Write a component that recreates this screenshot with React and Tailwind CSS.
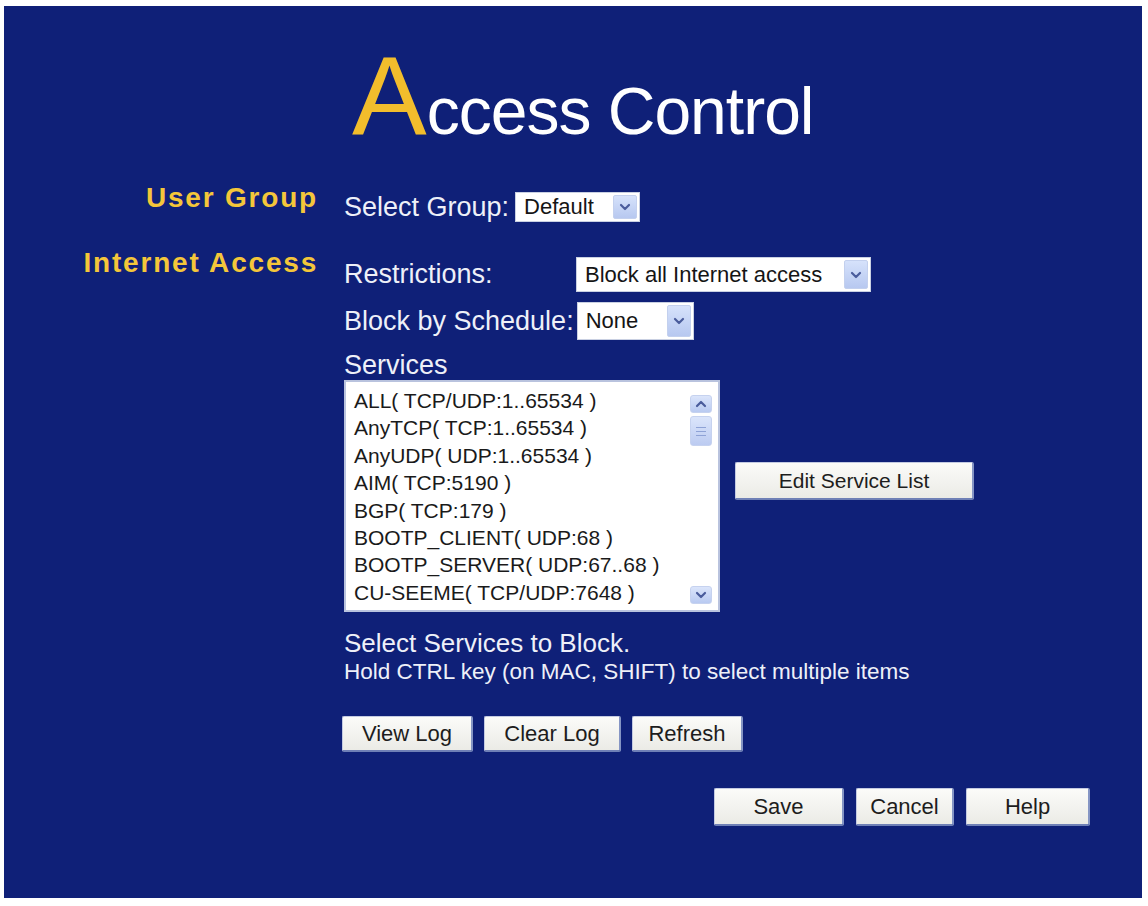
import React from 'react';

const services = [
  'ALL( TCP/UDP:1..65534 )',
  'AnyTCP( TCP:1..65534 )',
  'AnyUDP( UDP:1..65534 )',
  'AIM( TCP:5190 )',
  'BGP( TCP:179 )',
  'BOOTP_CLIENT( UDP:68 )',
  'BOOTP_SERVER( UDP:67..68 )',
  'CU-SEEME( TCP/UDP:7648 )',
];

const Chevron = ({ up = false }) => (
  <svg width="12" height="10" viewBox="0 0 12 10">
    <path
      d={up ? 'M2 7 L6 3 L10 7' : 'M2 3 L6 7 L10 3'}
      fill="none"
      stroke="#4a5c9c"
      strokeWidth="2.2"
      strokeLinecap="round"
      strokeLinejoin="round"
    />
  </svg>
);

const DropButton = () => (
  <div className="w-[24px] self-stretch my-[2px] mr-[2px] flex items-center justify-center rounded-[2px] bg-linear-to-b from-[#d6e2fb] to-[#b7c8f0] border border-[#c3d0ee]">
    <Chevron />
  </div>
);

const Select = ({ value, className }) => (
  <div className={`flex items-stretch bg-white border border-[#c9d0e2] ${className}`}>
    <div className="flex-1 flex items-center pl-[8px] text-[22px] text-[#151515] leading-none">{value}</div>
    <DropButton />
  </div>
);

const Button = ({ children, className }) => (
  <button
    className={`flex items-center justify-center bg-linear-to-b from-[#fbfbf9] to-[#ebebe6] border-t border-l border-[#c4cbe2] border-b-2 border-r-2 border-b-[#6f80b6] border-r-[#8595c4] rounded-[2px] text-[#1d1d1d] ${className}`}
  >
    {children}
  </button>
);

const ScrollBtn = ({ up }) => (
  <div className="w-[22px] h-[18px] flex items-center justify-center rounded-[3px] bg-linear-to-b from-[#dbe5fb] to-[#b9caf1] border border-[#c6d2ef]">
    <Chevron up={up} />
  </div>
);

export default function App() {
  return (
    <div
      className="w-[1148px] h-[906px] bg-white pt-[6px] pl-[4px]"
      style={{ fontFamily: '"Liberation Sans", Arial, sans-serif' }}
    >
      <div className="w-[1138px] h-[892px] bg-[#0f2078] flex flex-col">
        {/* Title */}
        <div className="mt-[34px] ml-[348px] leading-none text-[112px] whitespace-nowrap">
          <span className="text-[#f2bd2c]">A</span>
          <span className="text-[66px] text-white tracking-[-1px]">ccess Control</span>
        </div>

        <div className="flex mt-[40px]">
          {/* Section labels */}
          <div className="w-[314px] flex flex-col items-end text-[28px] font-bold tracking-[1.8px] text-[#f4c63a] leading-[30px] -mt-[9px]">
            <div>User Group</div>
            <div className="mt-[35px]">Internet Access</div>
          </div>

          {/* Form */}
          <div className="ml-[26px] w-[746px] flex flex-col text-[#eef0f8]">
            <div className="flex items-center h-[30px]">
              <span className="text-[27px] leading-[30px]">Select Group:</span>
              <Select value="Default" className="ml-[6px] w-[125px] h-[30px]" />
            </div>

            <div className="flex items-center h-[35px] mt-[35px]">
              <span className="text-[27px] w-[232px] leading-[35px]">Restrictions:</span>
              <Select value="Block all Internet access" className="w-[295px] h-[35px]" />
            </div>

            <div className="flex items-center h-[38px] mt-[10px]">
              <span className="text-[27px] leading-[38px]">Block by Schedule:</span>
              <Select value="None" className="ml-[3px] w-[117px] h-[38px]" />
            </div>

            <div className="text-[27px] leading-[27px] mt-[12px]">Services</div>

            <div className="flex items-start mt-[1px]">
              <div className="w-[376px] h-[232px] bg-white border-2 border-[#b9c3de] flex">
                <div className="flex-1 pl-[8px] pt-[5px] text-[21px] leading-[27.4px] text-[#1a1a1a] whitespace-nowrap overflow-hidden">
                  {services.map((s) => (
                    <div key={s}>{s}</div>
                  ))}
                </div>
                <div className="w-[26px] mr-[4px] flex flex-col items-center pt-[13px] pb-[6px]">
                  <ScrollBtn up />
                  <div className="mt-[3px] w-[22px] h-[30px] rounded-[3px] bg-linear-to-b from-[#dbe5fb] to-[#bccbf1] border border-[#c6d2ef] flex flex-col items-center justify-center gap-[3px]">
                    <div className="w-[10px] h-px bg-[#8ea2d6]" />
                    <div className="w-[10px] h-px bg-[#8ea2d6]" />
                    <div className="w-[10px] h-px bg-[#8ea2d6]" />
                  </div>
                  <div className="flex-1" />
                  <ScrollBtn />
                </div>
              </div>
              <Button className="ml-[15px] mt-[82px] w-[239px] h-[38px] text-[21px]">Edit Service List</Button>
            </div>

            <div className="text-[26px] leading-[28px] mt-[17px]">Select Services to Block.</div>
            <div className="text-[22.5px] leading-[26px] mt-[2px] whitespace-nowrap">
              Hold CTRL key (on MAC, SHIFT) to select multiple items
            </div>

            <div className="flex mt-[31px] -ml-[2px] gap-[11px] text-[22px]">
              <Button className="w-[131px] h-[36px]">View Log</Button>
              <Button className="w-[137px] h-[36px]">Clear Log</Button>
              <Button className="w-[111px] h-[36px]">Refresh</Button>
            </div>

            <div className="flex justify-end mt-[36px] gap-[12px] text-[22px]">
              <Button className="w-[130px] h-[38px]">Save</Button>
              <Button className="w-[98px] h-[38px]">Cancel</Button>
              <Button className="w-[124px] h-[38px]">Help</Button>
            </div>
          </div>
        </div>
      </div>
    </div>
  );
}
